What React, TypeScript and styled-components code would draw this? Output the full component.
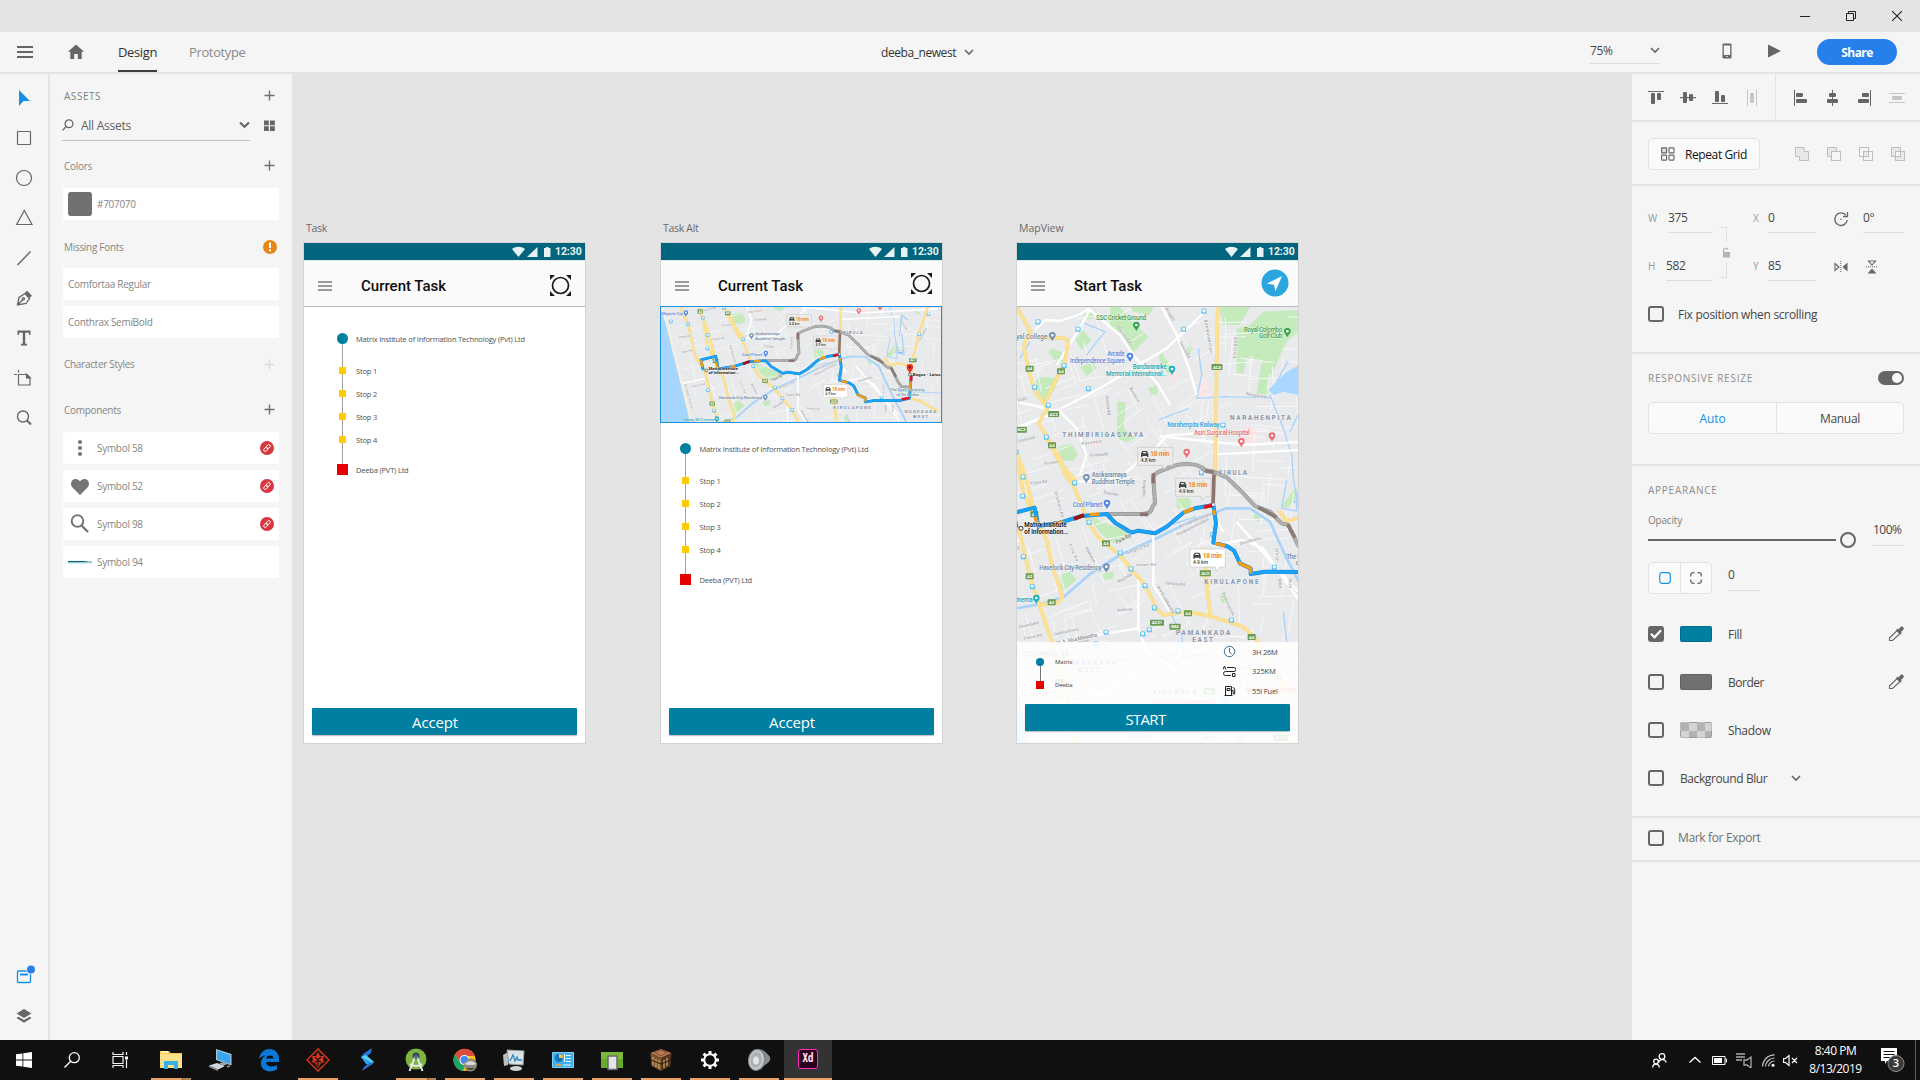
import React, { createContext, useContext } from 'react';
import styled, { createGlobalStyle, css } from 'styled-components';

const UI = '"Open Sans", "Noto Sans", sans-serif';
const BORDER = '#e4e4e4';
const PANEL = '#f5f5f5';
const INK = '#666666';

const Global = createGlobalStyle`
  * { box-sizing: border-box; }
  body { margin: 0; font-family: ${UI}; background: ${PANEL}; }
  svg { display: block; flex: none; }
`;

const Text = styled.span<{ $s?: number; $c?: string; $ls?: number; $w?: number }>`
  display: block;
  font-size: ${p => p.$s ?? 12}px;
  color: ${p => p.$c ?? '#464646'};
  letter-spacing: ${p => p.$ls ?? -0.3}px;
  font-weight: ${p => p.$w ?? 400};
  line-height: 16px;
  padding-top: ${p => p.$s ? 0 : 2}px;
  white-space: nowrap;
`;

/* ---------- icon helper ---------- */
type IconProps = { w: number; h: number; children: React.ReactNode; c?: string; f?: string; sw?: number };
const Icon = ({ w, h, children, c = INK, f = 'none', sw = 1.2 }: IconProps) => (
  <svg width={w} height={h} viewBox={`0 0 ${w} ${h}`} fill={f} stroke={c} strokeWidth={sw}>{children}</svg>
);
const Plus = ({ c = '#6e6e6e' }: { c?: string }) => (
  <Icon w={11} h={11} c={c} sw={1.4}><path d="M5.5 .5v10M.5 5.5h10" /></Icon>
);

/* ---------- frame ---------- */
const Screen = styled.div`
  width: 1920px; height: 1080px; display: flex; flex-direction: column; overflow: hidden; background: ${PANEL};
`;
const TitleBar = styled.div`
  height: 32px; background: #e4e4e4; display: flex; justify-content: flex-end; align-items: center; gap: 36px; padding-right: 18px;
`;
const Toolbar = styled.div`
  height: 42px; border-bottom: 2px solid ${BORDER}; background: ${PANEL};
  display: grid; grid-template-columns: 292px 1298px 330px;
`;
const ToolbarLeft = styled.div`display: flex; align-items: stretch; padding-left: 17px;`;
const ToolIconBox = styled.div<{ $w: number; $pt: number }>`width: ${p => p.$w}px; padding-top: ${p => p.$pt}px;`;
const Tab = styled.div<{ $on?: boolean }>`
  height: 40px; margin-right: 32px; padding-top: 12px; display: flex; white-space: nowrap;
  border-bottom: 2px solid ${p => p.$on ? '#3c3c3c' : 'transparent'};
`;
const DocTitle = styled.div`display: flex; align-items: flex-start; justify-content: center; gap: 8px; padding: 11px 27px 0 0;`;
const TitleChevron = styled.div`padding-top: 6px;`;
const ZoomField = styled.div`
  width: 70px; height: 26px; border-bottom: 1px solid #dcdcdc; display: flex; justify-content: space-between; align-items: center;
`;
const ToolbarRight = styled.div`display: flex; align-items: center; padding-bottom: 2px;`;
const ShareButton = styled.div`
  width: 80px; height: 26px; border-radius: 13px; background: #2680eb; display: flex; align-items: center; justify-content: center;
  margin-left: 36px; margin-top: 1px;
`;
const Gap = styled.div<{ $w: number }>`width: ${p => p.$w}px; flex: none;`;
const Main = styled.div`height: 966px; display: grid; grid-template-columns: 50px 242px 1340px 288px;`;

/* ---------- tool strip ---------- */
const Strip = styled.div`border-right: 2px solid ${BORDER}; display: flex; flex-direction: column; justify-content: space-between; padding: 4px 0;`;
const StripGroup = styled.div`display: flex; flex-direction: column;`;
const Tool = styled.div`height: 40px; display: flex; align-items: center; justify-content: center;`;

const ToolStrip = () => (
  <Strip>
    <StripGroup>
      <Tool><Icon w={24} h={24} f="#1592e6" c="none"><path d="M7 4v16l4.5-5H18z" /></Icon></Tool>
      <Tool><Icon w={24} h={24}><rect x="5.5" y="5.5" width="13" height="13" rx=".5" /></Icon></Tool>
      <Tool><Icon w={24} h={24}><circle cx="12" cy="12" r="7.5" /></Icon></Tool>
      <Tool><Icon w={24} h={24}><path d="M12.3 4.5 20 18.5H4.7z" /></Icon></Tool>
      <Tool><Icon w={24} h={24} sw={1.4}><path d="M5.5 19 18.5 5.5" /></Icon></Tool>
      <Tool><Icon w={24} h={24} sw={1.3}><path d="M5.500 19 7 11.500l6-4 4.500 5-3.500 5-8.500 1.500zM5.800 18.700l5-5.200" /><circle cx="11.400" cy="12.800" r="1.100" /><path d="m13.800 5.800 5 5" strokeWidth="3.200" /></Icon></Tool>
      <Tool><Icon w={24} h={24} f={INK} c="none"><path d="M5.500 4.500h13V9H17V6.700h-3.800v11H15V19.500H9v-1.800h1.800v-11H7V9H5.500z" /></Icon></Tool>
      <Tool><Icon w={24} h={24}><path d="M6.500 8.500h8.500l3 3v7.500H6.500zM2 8.500h3M6.500 4v2.500" /><path d="M14.500 8.500v3.500h3.500z" fill={INK} /></Icon></Tool>
      <Tool><Icon w={24} h={24} sw={1.4}><circle cx="11" cy="10.500" r="5.500" /><path d="m15 14.500 4 4" strokeWidth="2" /></Icon></Tool>
    </StripGroup>
    <StripGroup>
      <Tool><Icon w={26} h={26} c="#1592e6" sw={1.3}><rect x="6.500" y="8" width="13" height="11.500" rx=".8" /><path d="M9 11.500h8" strokeWidth="2" /><circle cx="20" cy="6.500" r="4.800" fill={PANEL} stroke="none" /><circle cx="20" cy="6.500" r="4" fill="#2680eb" stroke="none" /></Icon></Tool>
      <Tool><Icon w={24} h={24} f={INK} c="none"><path d="m12 5 7.500 4.500L12 14 4.500 9.500zM4.500 14l2-1.200L12 16l5.500-3.200 2 1.200L12 18.800z" /></Icon></Tool>
    </StripGroup>
  </Strip>
);

/* ---------- assets panel ---------- */
const Assets = styled.div`padding: 11px 13px 0 13px; display: flex; flex-direction: column;`;
const SectionHead = styled.div<{ $h: number; $pt?: number; $pr?: number }>`
  height: ${p => p.$h}px; padding: ${p => p.$pt ?? 0}px ${p => p.$pr ?? 4}px 0 1px;
  display: flex; align-items: center; justify-content: space-between; flex: none;
`;
const FilterRow = styled.div`height: 35px; display: flex; align-items: center; justify-content: space-between; padding-right: 4px; margin-left: -1px;`;
const FilterField = styled.div`
  width: 188px; height: 35px; border-bottom: 1px solid #c4c4c4; display: flex; align-items: center; gap: 7px; padding-top: 4px;
`;
const GridToggle = styled.div`padding-top: 4px;`;
const Grow = styled.div`flex: 1;`;
const Card = styled.div`
  height: 32px; margin-bottom: 6px; background: #fff; border-radius: 2px; display: flex; align-items: center; padding: 0 5px; flex: none;
`;
const CardThumb = styled.div`width: 29px; display: flex; align-items: center;`;
const Swatch = styled.div`width: 24px; height: 24px; border-radius: 3px; background: #707070;`;

const LinkBadge = () => (
  <svg width="14" height="14" viewBox="0 0 14 14">
    <circle cx="7" cy="7" r="7" fill="#d7373f" />
    <g transform="rotate(-48 7 7)" fill="none" stroke="#fff" strokeWidth=".9">
      <rect x="2.800" y="5.500" width="4.800" height="3" rx="1.500" /><rect x="6.400" y="5.500" width="4.800" height="3" rx="1.500" />
    </g>
  </svg>
);
const SMALL = '#868686';
const components: { name: string; linked: boolean; icon: React.ReactNode }[] = [
  { name: 'Symbol 58', linked: true, icon: <Icon w={24} h={24} f="#757575" c="none"><circle cx="12" cy="6" r="2.100" /><circle cx="12" cy="12" r="2.100" /><circle cx="12" cy="18" r="2.100" /></Icon> },
  { name: 'Symbol 52', linked: true, icon: <Icon w={24} h={24} f="#757575" c="none"><path d="M12 21 4.500 13.600C1.800 10.800 2.800 5 7.500 5c2 0 3.600 1.200 4.500 2.600C12.900 6.200 14.500 5 16.500 5c4.700 0 5.700 5.800 3 8.600z" /></Icon> },
  { name: 'Symbol 98', linked: true, icon: <Icon w={24} h={24} c="#757575" sw={2}><circle cx="9.500" cy="9" r="5.800" /><path d="m13.500 13.500 6.500 6.500" strokeWidth="2.400" /></Icon> },
  { name: 'Symbol 94', linked: false, icon: <Icon w={24} h={24} c="#00657d" sw={1.5}><path d="M0 11.700h20" /><path d="M17 11.900h7" stroke="#7fb2be" /><path d="M0 13h24" stroke="#b9d5dc" strokeWidth="1" /></Icon> },
];

const AssetsPanel = () => (
  <Assets>
    <SectionHead $h={21}><Text $s={10} $ls={0.55} $c="#808080">ASSETS</Text><Plus /></SectionHead>
    <FilterRow>
      <FilterField>
        <Icon w={12} h={12} sw={1.3}><circle cx="7" cy="4.800" r="3.900" /><path d="M4.200 7.600.6 11.300" /></Icon>
        <Text $ls={-0.25} $c="#5f5f5f">All Assets</Text><Grow />
        <Icon w={11} h={8} sw={2.2}><path d="m1 1.500 4.500 4.300L10 1.500" /></Icon>
      </FilterField>
      <GridToggle><Icon w={11} h={11} f={INK} c="none"><path d="M0 .5h4.800v4.700H0zM6 .5h4.800v4.700H6zM0 6.300h4.800V11H0zM6 6.300h4.800V11H6z" /></Icon></GridToggle>
    </FilterRow>
    <SectionHead $h={47} $pt={2}><Text $s={10} $c={SMALL}>Colors</Text><Plus /></SectionHead>
    <Card><CardThumb><Swatch /></CardThumb><Text $s={10} $c={SMALL}>#707070</Text></Card>
    <SectionHead $h={42} $pr={2}><Text $s={10} $c={SMALL}>Missing Fonts</Text>
      <svg width="14" height="14" viewBox="0 0 14 14"><circle cx="7" cy="7" r="7" fill="#e68619" /><path d="M7 2.500v5.500M7 9.200v2" stroke="#fff" strokeWidth="2" /></svg>
    </SectionHead>
    <Card><Text $s={10} $c={SMALL}>Comfortaa Regular</Text></Card>
    <Card><Text $s={10} $c={SMALL}>Conthrax SemiBold</Text></Card>
    <SectionHead $h={40}><Text $s={10} $c={SMALL}>Character Styles</Text><Plus c="#dcdcdc" /></SectionHead>
    <SectionHead $h={48} $pt={3}><Text $s={10} $c={SMALL}>Components</Text><Plus /></SectionHead>
    {components.map(c => (
      <Card key={c.name}><CardThumb>{c.icon}</CardThumb><Text $s={10} $c={SMALL}>{c.name}</Text><Grow />{c.linked && <LinkBadge />}</Card>
    ))}
  </Assets>
);

/* ---------- map drawing ---------- */
type Bounds = { x0: number; y0: number; x1: number; y1: number };
const MapBounds = createContext<Bounds>({ x0: 0, y0: 0, x1: 0, y1: 0 });
const visible = (b: Bounds, x: number, y: number, w: number) => x + w > b.x0 && x < b.x1 && y > b.y0 && y < b.y1 + 4;

type MapTextProps = { x: number; y: number; l: number; c: string; s?: number; b?: boolean; r?: number; children: string };
const T = ({ x, y, l, c, s = 19, b, r, children }: MapTextProps) => {
  const bounds = useContext(MapBounds);
  if (!visible(bounds, x, y, l)) return null;
  return (
    <text x={x} y={y} textLength={l} fontSize={s} fill={c} fontWeight={b ? 700 : 500} fontFamily="Roboto, sans-serif"
      transform={r ? `rotate(${r} ${x} ${y})` : undefined} stroke="#ffffff" strokeOpacity=".6" strokeWidth="2.500" paintOrder="stroke">{children}</text>
  );
};
const Pin = ({ x, y, c }: { x: number; y: number; c: string }) => (
  <g><path d={`M${x} ${y + 15}c-3-8-10-11-10-18a10 10 0 0 1 20 0c0 7-7 10-10 18z`} fill={c} /><circle cx={x} cy={y - 3} r="4" fill="#fff" /></g>
);
const GREEN = '#419a4b', BLUE = '#5f83d8', SLATE = '#6c87a3', TEAL = '#23a5b3', RED = '#dd7078', AREA = '#8393ad', ROADTXT = '#a2a2a2';

const minorRoads = (() => {
  let seed = 11;
  const rnd = () => { seed = (seed * 16807) % 2147483647; return seed / 2147483647; };
  let d = '';
  for (let i = 0; i < 400; i++) {
    const x = -90 + rnd() * 1160, y = 290 + rnd() * 1290;
    const base = x < 300 ? -0.28 : x < 560 ? -0.55 : 0.05;
    const a = base + (rnd() < 0.5 ? 0 : Math.PI / 2) + (rnd() - 0.5) * 0.24;
    const l = 35 + rnd() * 90;
    d += `M${x.toFixed(0)} ${y.toFixed(0)}l${(Math.cos(a) * l).toFixed(0)} ${(Math.sin(a) * l).toFixed(0)}`;
  }
  return d;
})();
const yellowRoads = [
  'M20 276 45 320 62 352 48 372 42 400 60 480 75 530 103 567 112 580 85 625 105 655 150 730 165 780 190 810 235 920 262 965 330 1020 365 1065 405 1110 440 1180 460 1200 530 1190 600 1203 700 1235 740 1275 800 1385 864 1445',
  'M62 366 128 368 165 370 175 380 165 440 135 500 103 567',
  'M623 276 620 450 615 760 610 866', 'M578 1000 588 1080 600 1203',
  'M-80 664-44 743-16 873 27 945 60 1085 80 1145 130 1295 165 1415 190 1584', 'M20 735 40 830 76 910 110 975 130 1065 157 1145 145 1163 83 1170',
  'M-1 664 42 772 76 900', 'M107 664 150 743 200 801',
  'M993 664 957 772 928 887 918 974 914 1060 964 1074 1036 1118', 'M806 887 830 918 864 910 925 920',
];
const whiteRoads = [
  'M20 637 105 605 270 520 470 400 590 285', 'M20 640 60 627', 'M75 345 105 315 150 318 205 300 240 280', 'M240 285 190 370 140 450',
  'M455 276 500 360 540 470 560 540', 'M190 801 330 790 400 725 440 697 470 662 615 650', 'M615 718 870 705', 'M385 1090 385 1240 290 1255 150 1280',
  'M385 1240 410 1310 480 1350 515 1310', 'M240 285 330 360 370 420 445 510 480 570', 'M20 560 150 590 200 640 230 720 210 780', 'M430 960 430 1110 480 1190',
  'M480 1350 350 1390 300 1430 90 1480', 'M610 990 700 975 760 1000 800 1060 864 1130', 'M640 950 610 900', 'M-90 1000 30 975', 'M480 1350 560 1460 590 1584', 'M450 664 700 690 1036 672', 'M680 920 800 1060 870 1160',
];
const greens = [
  'M75 490 105 485 145 490 135 520 105 565 85 530z', 'M125 400 155 410 160 440 140 445 115 410z', 'M195 375 220 345 245 375 215 405z', 'M220 300 260 278 250 310 230 315z',
  'M300 276 330 276 385 340 400 350 415 365 370 412 340 365 300 330z', 'M360 276 430 276 420 300 370 290z', 'M210 455 250 440 258 460 230 485z', 'M455 412 500 480 485 495 445 430z', 'M415 520 440 510 445 535 425 543z',
  'M627 276 720 276 690 330 640 330z', 'M680 340 720 330 760 290 864 285 864 350 830 380 780 490 770 540 740 535 755 440 710 430 700 475 680 475z',
  'M322 560 348 562 340 640 375 670 350 682 320 670z', 'M145 695 180 688 195 705 190 738 150 735z', 'M500 850 538 848 540 880 500 880z', 'M235 900 300 930 345 945 365 970 310 985 270 955z',
  'M735 895 757 905 745 920 730 910z', 'M150 1080 180 1070 200 1095 155 1130z', 'M275 1080 310 1068 310 1090 285 1095z', 'M630 1140 645 1135 650 1160 635 1165z', 'M535 390 550 400 540 418 528 410z', 'M157 690 185 688 205 720 185 738z',
  'M930 670 960 690 950 700z', 'M860 815 868 845 830 880 812 875z', 'M525 860 545 855 540 880z',
];
const stations: [number, number][] = [
  [84, 321], [204, 343], [582, 289], [521, 343], [162, 452], [74, 517], [235, 521], [115, 571], [109, 667], [39, 786], [194, 804], [574, 773], [639, 631],
  [237, 922], [331, 1014], [363, 1062], [405, 1112], [433, 1179], [504, 1188], [664, 1216], [40, 1025], [67, 1115], [288, 1252], [398, 1257], [418, 1244], [609, 959], [793, 1057], [258, 1287], [643, 1453], [808, 1387], [589, 1564], [690, 1577], [857, 1541],
  [-46, 738], [18, 711], [-120, 727], [38, 844], [996, 696], [955, 783], [875, 858],
];
const shields: [number, number, string][] = [
  [59, 461, 'A4'], [153, 469, 'A4'], [131, 597, 'AC3'], [34, 644, 'AC2'], [126, 691, 'A4'], [621, 456, 'AC8'], [73, 898, 'A2'], [288, 985, 'A4'], [59, 1084, 'A2'], [125, 1162, 'A2'],
  [586, 1075, 'AC0'], [441, 1223, 'AC21'], [534, 1195, 'A4'], [495, 1235, 'B84'], [725, 1266, 'A4'], [599, 1429, 'B84'], [812, 1568, 'AC19'], [147, 1402, 'A2'], [7, 683, 'A2'], [928, 895, 'AC1'],
];
const roadNames: [number, number, number, number, string][] = [
  [-85, 800, 50, -8, 'Adams Rd'], [-70, 865, 45, -12, 'Nimal Rd'], [-30, 1015, 60, -12, 'Vajira Rd'], [100, 750, 45, -8, 'Thurstan'], [240, 725, 55, -4, 'Fonseka Rd'],
  [60, 808, 52, -5, 'Vijaya Rd'], [320, 335, 70, 55, 'Maitland Pl'], [508, 382, 55, 62, 'Sarana Rd'], [583, 315, 100, 80, 'Bambalapitiya'], [287, 540, 60, 85, 'Jawatta Rd'], [358, 520, 50, 60, 'Bullers Ln'], [678, 430, 65, -88, 'Elvitigala'],
  [465, 280, 45, 62, 'Alfred Pl'], [708, 540, 60, 10, 'Nawala Rd'], [24, 682, 52, -12, 'Lauries Rd'], [24, 560, 28, -15, 'Dupli'], [280, 835, 45, 12, 'Siripa Rd'], [133, 830, 80, 75, 'Dickmans Rd'], [175, 990, 55, 65, 'Fife Rd'], [225, 1000, 50, 60, 'Park Avenue'],
  [350, 1018, 72, -20, 'Gregory Rd'], [378, 1052, 60, 0, 'Iswari Rd'], [325, 1105, 48, -30, 'Wasala Rd'], [465, 1108, 60, 5, 'Temple Rd'], [440, 1115, 95, 60, 'W A Silva Mawatha'], [322, 1190, 45, -5, 'Arethusa'], [130, 1262, 78, -12, 'Jaya Road Lane'], [26, 1240, 62, -12, 'Alexandra Rd'],
  [42, 1275, 55, -12, 'Frances Rd'], [500, 965, 110, -27, 'Thalakotuwa Gardens'], [510, 938, 95, -22, 'Kirulapone Canal'], [635, 1135, 75, 65, 'Polhengoda'], [690, 990, 65, -15, 'Suvisuddharama'], [795, 1000, 40, 85, '5th Ln'], [805, 1090, 30, 85, '3rd Ln'], [835, 1090, 30, 85, '7th Ln'], [405, 845, 50, -88, 'Isipathana'],
  [190, 1290, 50, -12, 'Hampden'], [310, 1338, 50, -3, 'Fussels Ln'], [520, 1330, 70, -8, 'Edmonton Rd'], [100, 1440, 50, -8, 'Moor Rd'], [170, 1460, 60, -8, 'Hotel Road'], [25, 1390, 100, 75, 'Marine Drive'], [780, 1475, 50, -5, 'Rubber Ln'], [360, 1570, 55, -2, 'Station Rd'], [690, 1365, 60, -15, 'Kirula Road'],
  [-62, 1000, 110, 75, 'Colombo Plan Rd'], [870, 720, 50, 60, 'Park Rd'], [960, 810, 60, -60, 'Nawala Road'], [215, 690, 60, -8, 'Kassapa'],
];
const bubbles: { x: number; y: number; km: string; fill: string }[] = [
  { x: 383, y: 697, km: '4.8 km', fill: '#ececec' }, { x: 497, y: 790, km: '4.9 km', fill: '#ececec' }, { x: 540, y: 1002, km: '4.9 km', fill: '#ffffff' },
];

const ROUTE = 'M20 938 10 894 74 878 85 933 150 923 215 903 290 897 315 923 365 953 385 947 435 955 470 935 520 893 555 880 610 870 618 925 610 983 650 993 672 1007 690 1045 722 1060 722 1077 765 1070 870 1071 914 1060 921 959';
const ALT = 'M290 897H395Q425 897 427 875L435 865 430 790Q430 775 455 767L500 750Q560 740 585 765L610 770 650 787 690 825 735 873 780 890 815 925 835 930 863 988 878 1010 918 1012';

const MapArt = ({ w, h, view }: { w: number; h: number; view: [number, number, number, number] }) => {
  const bounds = { x0: view[0], y0: view[1], x1: view[0] + view[2], y1: view[1] + view[3] };
  return (
    <MapBounds.Provider value={bounds}>
      <svg width={w} height={h} viewBox={view.join(' ')} preserveAspectRatio="none" fill="none" strokeLinejoin="round">
        <rect x="-170" y="270" width="1240" height="1330" fill="#e9eaec" />
        {greens.map(d => <path key={d} d={d} fill="#c5ebbd" />)}
        <path d="M250 670 275 672 270 692 240 695zM568 495 590 495 605 540 570 548zM475 475 500 470 500 500 478 505zM700 630 750 640 740 690 690 680z" fill="#f8e5e6" />
        <path d={minorRoads} stroke="#f8f8fa" strokeWidth="3" />
        <path d="M20 1180 100 1165 160 1147 240 1077 330 1020 450 965 540 920 650 880 720 880 780 920 800 965 830 1030 900 1164" stroke="#a9d3fb" strokeWidth="8" />
        <path d="M780 540 820 640 845 720 850 790 864 870M560 550 640 545 780 548M560 550 575 480 565 400M830 795 815 880 860 888 860 830M833 440 790 520M864 1030 1050 1038M480 1190 515 1260 520 1310 430 1330M820 1190 830 1280M840 650 864 600M480 930 560 905M445 615 535 580M210 320 285 350 230 420M60 380 30 430" stroke="#a9d3fb" strokeWidth="4" />
        <path d="M790 540 775 525 830 470 864 452 864 540 820 530z" fill="#a9d7ff" />
        <path d="M870 790 880 700 905 720M850 860 890 870 880 780" stroke="#a9d3fb" strokeWidth="6" />
        {whiteRoads.map(d => <path key={d} d={d} stroke="#fff" strokeWidth="7" />)}
        {yellowRoads.map(d => <path key={d} d={d} stroke="#f5d884" strokeWidth="11" />)}
        {yellowRoads.map(d => <path key={`inner-${d}`} d={d} stroke="#fde293" strokeWidth="8" />)}
        <path d="M-170 660H-158L-131 743-81 945-27 1164 30 1400 68 1590H-170z" fill="#f5f0e2" />
        <path d="M-170 660H-168L-141 743-91 945-37 1164 20 1400 56 1590H-170z" fill="#a6d5fd" />
        {roadNames.map(([x, y, l, r, t]) => <T key={t} x={x} y={y} l={l} r={r} s={13} c={ROADTXT}>{t}</T>)}
        {stations.map(([x, y]) => <g key={`${x}-${y}`}><rect x={x - 7.5} y={y - 7.5} width="15" height="15" rx="3" fill="#4dbcf5" /><path d={`M${x - 4} ${y - 4.5}h8v6h-8zM${x - 3} ${y + 4}h6`} fill="#fff" stroke="#fff" strokeWidth="1.500" /></g>)}
        {shields.filter(([x, y]) => visible(bounds, x, y, 0)).map(([x, y, t]) => (
          <g key={`${x}-${y}`}><rect x={x - t.length * 4.5 - 3} y={y - 9} width={t.length * 9 + 6} height="18" rx="2" fill="#6b9b50" /><text x={x} y={y + 5} textAnchor="middle" fontSize="13" fontWeight="700" fill="#fff" fontFamily="Roboto, sans-serif">{t}</text></g>
        ))}
        <path d={ALT} stroke="#8d8d8d" strokeWidth="12" /><path d={ALT} stroke="#b0b0b0" strokeWidth="9" />
        <path d="M430 775V805M390 898H415M612 778 609 866" stroke="#8d7370" strokeWidth="11" /><path d="M585 768 612 772M745 877 800 907M833 928 855 968" stroke="#8a7d77" strokeWidth="11" />
        <path d={ROUTE} stroke="#1482d2" strokeWidth="12" /><path d={ROUTE} stroke="#18a4f8" strokeWidth="9" />
        <path d="M75 905 83 930M138 926 160 921M240 899 268 897M522 892 550 881M611 885 613 900M615 985 645 992M686 1040 694 1048 722 1060 722 1075M10 894 16 925M914 1030 919 990" stroke="#f59b14" strokeWidth="10" />
        <path d="M192 912 222 900" stroke="#a50f14" strokeWidth="11" /><path d="M582 877 610 870M880 1065 912 1060M920 985 922 962" stroke="#e4131b" strokeWidth="11" />
        <circle cx="610" cy="869" r="4" fill="#fff" />
        <T x={258} y={314} l={150} c={GREEN}>SSC Cricket Ground</T><T x={8} y={371} l={104} c={SLATE}>oyal College</T>
        <T x={292} y={424} l={52} c={BLUE}>Arcade</T><T x={180} y={444} l={165} c={BLUE}>Independence Square</T>
        <T x={368} y={463} l={102} c={TEAL}>Bandaranaike</T><T x={288} y={484} l={182} c={TEAL}>Memorial International...</T>
        <T x={702} y={350} l={115} c={GREEN}>Royal Colombo</T><T x={747} y={370} l={70} c={GREEN}>Golf Club</T>
        <T x={660} y={614} l={182} c={AREA} b>NARAHENPITA</T><T x={157} y={665} l={243} c={AREA} b>THIMBIRIGASYAYA</T>
        <T x={472} y={637} l={157} c="#2d9fdc">Narahenpita Railway</T><T x={552} y={660} l={167} c={RED}>Asiri Surgical Hospital</T>
        <T x={625} y={780} l={86} c={AREA} b>KIRULA</T><T x={245} y={787} l={105} c={SLATE}>Asokaramaya</T><T x={245} y={806} l={130} c={SLATE}>Buddhist Temple</T>
        <T x={188} y={875} l={88} c={BLUE}>Cool Planet</T><T x={88} y={1066} l={187} c={SLATE}>Havelock City Residency</T>
        <T x={583} y={1106} l={163} c={AREA} b>KIRULAPONE</T><T x={498} y={1261} l={163} c={AREA} b>PAMANKADA</T><T x={547} y={1282} l={62} c={AREA} b>EAST</T>
        <T x={38} y={1324} l={138} c={AREA} b>COLOMBO 06</T><T x={155} y={1350} l={163} c={AREA} b>PAMANKADA</T><T x={202} y={1372} l={68} c={AREA} b>WEST</T><T x={428} y={1436} l={132} c={AREA} b>VILAWALA</T>
        <T x={428} y={1470} l={190} c={RED}>Colombo South Teaching</T><T x={708} y={1431} l={152} c={RED}>Medihelp Hospitals</T>
        <T x={-66} y={1160} l={134} c={TEAL}>Savoy 3D Cinema</T><T x={-160} y={700} l={92} c={BLUE}>Majestic City</T>
        <T x={829} y={1031} l={150} c={SLATE}>The Open University</T><T x={857} y={1050} l={95} c={SLATE}>of Sri Lanka</T>
        <T x={892} y={1126} l={137} c={AREA} b>NUGEGODA</T><T x={928} y={1148} l={66} c={AREA} b>WEST</T>
        <T x={320} y={988} l={50} r={-28} s={16} c="#777">Park Rd</T><T x={140} y={1290} l={125} r={-12} s={16} c="#888">W. A. Silva Mawatha</T>
        <Pin x={379} y={333} c="#34a048" /><Pin x={127} y={364} c="#7393b3" /><Pin x={360} y={426} c="#4f86ec" /><Pin x={486} y={465} c="#1fb0bf" /><Pin x={832} y={352} c="#34a048" />
        <Pin x={786} y={665} c="#ef6c72" /><Pin x={694} y={682} c="#ef6c72" /><Pin x={530} y={714} c="#ef6c72" /><Pin x={229} y={790} c="#7393b3" /><Pin x={291} y={867} c="#4f86ec" /><Pin x={289} y={1058} c="#7393b3" /><Pin x={79} y={1152} c="#1fb0bf" /><Pin x={-55} y={691} c="#4f86ec" />
        <circle cx="33" cy="940" r="6" fill="#fff" stroke="#333" strokeWidth="3" />
        <T x={43} y={936} l={127} c="#222" b>Matrix Institute</T><T x={43} y={957} l={132} c="#222" b>of Information...</T>
        <T x={928} y={964} l={120} c="#222" b>Bogus - Lotus</T>
        <path d="M915 958c-3-18-14-19-14-32a14 14 0 0 1 28 0c0 13-11 14-14 32z" fill="#e0342c" /><circle cx="915" cy="926" r="5" fill="#8c1510" /><circle cx="915" cy="958" r="6" fill="#fff" stroke="#333" strokeWidth="3" />
        {bubbles.map(({ x, y, km, fill }) => (
          <g key={y} transform={`translate(${x} ${y})`}>
            <path d="M0 0H106V54H90L78 66 76 54H0z" fill={fill} stroke="#c4c4c4" strokeWidth="2" />
            <path d="M10 29V19l4-8h14l4 8v10h-4v-3H14v3z" fill="#444" /><path d="M15 18l2-4h8l2 4z" fill={fill} />
            <text x="38" y="26" textLength="57" fontSize="20" fontWeight="700" fill="#f28c1e" fontFamily="Roboto, sans-serif">18 min</text>
            <text x="9" y="44" textLength="45" fontSize="15" fontWeight="500" fill="#444" fontFamily="Roboto, sans-serif">{km}</text>
          </g>
        ))}
      </svg>
    </MapBounds.Provider>
  );
};

/* ---------- artboards ---------- */
const Canvas = styled.div`background: #e4e4e4; padding: 146px 0 0 12px; display: flex; align-items: flex-start;`;
const BoardColumn = styled.div<{ $mr: number }>`width: 281px; margin-right: ${p => p.$mr}px;`;
const BoardLabel = styled.div`height: 23px; padding-left: 2px; display: flex; align-items: flex-start;`;
const Board = styled.div`height: 500px; background: #fff; display: flex; flex-direction: column; box-shadow: 0 0 0 1px #d4d4d4;`;
const StatusBar = styled.div`
  height: 17px; background: #00657d; display: flex; align-items: center; justify-content: flex-end; padding-right: 4px; flex: none;
`;
const StatusTime = styled.span`font: 700 10.5px/17px Roboto, sans-serif; color: #e8f2f4; width: 26px; letter-spacing: -.1px;`;
const AppBar = styled.div`
  height: 47px; background: #fafafa; border-top: 1px solid #dfeaec; border-bottom: 1px solid #b9b9b9; display: flex; align-items: center; padding: 4px 0 0 14px; flex: none;
`;
const AppTitle = styled.span`font: 500 15px/20px Roboto, sans-serif; letter-spacing: 0; color: #0c0c0c; margin-left: 29px; flex: 1;`;
const AppAction = styled.div<{ $mr: number; $up?: number }>`margin-right: ${p => p.$mr}px; margin-bottom: ${p => p.$up ?? 0}px;`;
const Stops = styled.div<{ $pl: number; $pt: number }>`
  position: relative; margin-left: ${p => p.$pl}px; margin-top: ${p => p.$pt}px; height: 142px; flex: none;
  display: flex; flex-direction: column;
  &::before { content: ''; position: absolute; left: 5px; top: 5px; bottom: 5px; width: 1px; background: #a0a0a0; }
`;
const Stop = styled.div<{ $h: number; $mt: number }>`height: ${p => p.$h}px; margin-top: ${p => p.$mt}px; display: flex; align-items: center; flex: none;`;
const MarkerSlot = styled.div`width: 19.5px; display: flex; position: relative; flex: none;`;
const Marker = styled.div<{ $k: 'start' | 'mid' | 'end' }>`
  ${p => p.$k === 'start' && css`width: 11px; height: 11px; border-radius: 50%; background: #007fa3;`}
  ${p => p.$k === 'mid' && css`width: 7px; height: 7px; margin-left: 2px; background: #ffcc00;`}
  ${p => p.$k === 'end' && css`width: 11px; height: 11px; background: #e60000;`}
`;
const Button = styled.div`
  height: 27px; margin: 0 8px; background: #007fa3; border-radius: 1px; box-shadow: 0 1px 1px rgba(0,0,0,.25);
  display: flex; align-items: center; justify-content: center; padding-right: 19px; flex: none;
`;
const StartButton = styled(Button)`padding: 2px 24px 0 0;`;
const Spacer = styled.div`flex: 1;`;
const BottomPad = styled.div<{ $h: number }>`height: ${p => p.$h}px; flex: none;`;
const MapFrame = styled.div<{ $sel?: boolean }>`
  margin: ${p => p.$sel ? '-1px 0 0 -1px' : '0'}; height: ${p => p.$sel ? 117 : 436}px; flex: none; position: relative; overflow: hidden;
  width: ${p => p.$sel ? 282 : 281}px;
  ${p => p.$sel && css`border: 1px solid #1e90e0;`}
`;
const TripSheet = styled.div`
  position: absolute; left: 0; right: 0; bottom: 0; height: 101px; background: rgba(255,255,255,.86); display: flex; flex-direction: column;
`;
const TripInfo = styled.div`height: 62px; display: flex; justify-content: space-between;`;
const TripFacts = styled.div`display: flex; flex-direction: column; width: 75px;`;
const Fact = styled.div`height: 19.5px; display: grid; grid-template-columns: 29px 1fr; align-items: center;`;
const TripList = styled.div`
  position: relative; width: 60px; height: 31px; margin: 12px 0 0 19px; display: flex; flex-direction: column; justify-content: space-between;
  &::before { content: ''; position: absolute; left: 4px; top: 4px; bottom: 4px; width: 1px; background: #777; }
`;
const TripStop = styled.div`height: 8px; display: grid; grid-template-columns: 19px 1fr; align-items: center;`;
const TripMarker = styled.div<{ $end?: boolean }>`position: relative; width: 8px; height: 8px; background: ${p => p.$end ? '#e60000' : '#007fa3'}; border-radius: ${p => p.$end ? 0 : '50%'};`;

const Burger = () => <Icon w={14} h={10} c="#7b7b7b" sw={1.3}><path d="M0 1h14M0 5h14M0 9h14" /></Icon>;
const StatusIcons = () => (
  <svg width="43" height="12" viewBox="0 0 43 12" fill="#e8f2f4"><path d="M0 3C4 0 9 0 13 3L6.500 11zM15 11 25.500 1V11zM32 2h2V1h2.500v1h2v9H32z" /></svg>
);
const Phone = ({ title, action, children }: { title: string; action: React.ReactNode; children: React.ReactNode }) => (
  <Board>
    <StatusBar><StatusIcons /><StatusTime>12:30</StatusTime></StatusBar>
    <AppBar><Burger /><AppTitle>{title}</AppTitle>{action}</AppBar>
    {children}
  </Board>
);
const FocusIcon = () => (
  <Icon w={21} h={21} c="#1a1a1a" sw={1.7}><circle cx="10.500" cy="10.500" r="8" /><path d="M0 0h5L0 5zM21 0h-5l5 5zM0 21h5l-5-5zM21 21h-5l5-5z" fill="#1a1a1a" stroke="none" /></Icon>
);
const stops: { name: string; kind: 'start' | 'mid' | 'end'; h: number; mt: number }[] = [
  { name: 'Matrix Institute of Information Technology (Pvt) Ltd', kind: 'start', h: 11, mt: 0 },
  { name: 'Stop 1', kind: 'mid', h: 7, mt: 23 },
  { name: 'Stop 2', kind: 'mid', h: 7, mt: 16 },
  { name: 'Stop 3', kind: 'mid', h: 7, mt: 16 },
  { name: 'Stop 4', kind: 'mid', h: 7, mt: 16 },
  { name: 'Deeba (PVT) Ltd', kind: 'end', h: 11, mt: 21 },
];
const StopList = ({ pl, pt }: { pl: number; pt: number }) => (
  <Stops $pl={pl} $pt={pt}>
    {stops.map(s => (
      <Stop key={s.name} $h={s.h} $mt={s.mt}><MarkerSlot><Marker $k={s.kind} /></MarkerSlot><Text $s={7.5} $ls={-0.18} $c="#505050">{s.name}</Text></Stop>
    ))}
  </Stops>
);

const CanvasArea = () => (
  <Canvas>
    <BoardColumn $mr={76}>
      <BoardLabel><Text $s={10.5} $c="#6a6a6a">Task</Text></BoardLabel>
      <Phone title="Current Task" action={<AppAction $mr={14}><FocusIcon /></AppAction>}>
        <StopList pl={32.5} pt={26} />
        <Spacer /><Button><Text $s={15} $ls={-0.15} $c="#fff">Accept</Text></Button><BottomPad $h={8} />
      </Phone>
    </BoardColumn>
    <BoardColumn $mr={75}>
      <BoardLabel><Text $s={10.5} $c="#6a6a6a" $ls={-0.3}>Task Alt</Text></BoardLabel>
      <Phone title="Current Task" action={<AppAction $mr={10} $up={4}><FocusIcon /></AppAction>}>
        <MapFrame $sel><MapArt w={280} h={115} view={[-163, 664, 1213, 500]} /></MapFrame>
        <StopList pl={19} pt={20} />
        <Spacer /><Button><Text $s={15} $ls={-0.15} $c="#fff">Accept</Text></Button><BottomPad $h={8} />
      </Phone>
    </BoardColumn>
    <BoardColumn $mr={0}>
      <BoardLabel><Text $s={10.5} $c="#6a6a6a" $ls={0}>MapView</Text></BoardLabel>
      <Phone title="Start Task" action={<AppAction $mr={9} $up={5}>
        <svg width="28" height="28" viewBox="0 0 28 28"><circle cx="14" cy="14" r="13.500" fill="#2aa5dd" /><path d="M21 7 6 14.500l7 1.300 1.500 6.400z" fill="#fff" /></svg>
      </AppAction>}>
        <MapFrame>
          <MapArt w={281} h={436} view={[21, 276, 843, 1308]} />
          <TripSheet>
            <TripInfo>
              <TripList>
                <TripStop><TripMarker /><Text $s={6} $ls={-0.05}>Matrix</Text></TripStop>
                <TripStop><TripMarker $end /><Text $s={6} $ls={-0.1}>Deeba</Text></TripStop>
              </TripList>
              <TripFacts>
                <Fact><Icon w={13} h={13} c="#3e6d92" sw={1}><circle cx="6.500" cy="6.500" r="5.200" /><path d="M6.500 3v4l2 2" /></Icon><Text $s={7.5} $ls={-0.25}>3H 26M</Text></Fact>
                <Fact><Icon w={13} h={13} c="#222" sw={1}><path d="M4 2.500h7a1.700 1.700 0 0 1 0 4H2.500a1.700 1.700 0 0 0 0 4H8M0 4.500 1.500 1 3 4.500M9.500 8.500h2.500v3H9.500z" /></Icon><Text $s={7.5} $ls={-0.1}>325KM</Text></Fact>
                <Fact><Icon w={13} h={13} c="#222" sw={1}><path d="M2.500 11.500v-9h6v9zM1.500 11.500h8M4 4.500h3v2H4zM8.500 6.500h1.700v3.500h1.500v-5L9.700 3" /></Icon><Text $s={7.5} $ls={-0.15}>55l Fuel</Text></Fact>
              </TripFacts>
            </TripInfo>
            <StartButton><Text $s={15} $ls={-0.7} $c="#fff">START</Text></StartButton>
          </TripSheet>
        </MapFrame>
      </Phone>
    </BoardColumn>
  </Canvas>
);

/* ---------- property inspector ---------- */
const Section = styled.div<{ $h: number }>`height: ${p => p.$h}px; border-bottom: 2px solid ${BORDER}; flex: none;`;
const AlignSection = styled(Section)`display: grid; grid-template-columns: 144px 144px;`;
const AlignGroup = styled.div<{ $sep?: boolean }>`
  display: flex; align-items: center; gap: 16px; padding: 2px 0 0 ${p => p.$sep ? 16 : 17}px; border-right: ${p => p.$sep ? `1px solid ${BORDER}` : 'none'};
`;
const RepeatSection = styled(Section)`display: flex; align-items: center; padding: 2px 0 0 16px;`;
const RepeatButton = styled.div`
  width: 112px; height: 32px; border: 1px solid #e2e2e2; border-radius: 4px; background: #fafafa; display: flex; align-items: center; gap: 10px; padding-left: 12px; margin-right: 35px;
`;
const BoolRow = styled.div`display: flex; gap: 18px;`;
const TransformSection = styled(Section)`padding: 8px 16px 0;`;
const TransformRow = styled.div`height: 48px; display: grid; grid-template-columns: 20px 44px 41px 15px 48px 24px 23px 41px; align-items: center;`;
const Field = styled.div<{ $dx?: number }>`
  height: 30px; display: flex; align-items: center; border-bottom: 1px solid #dedede; margin-left: ${p => -(p.$dx ?? 0)}px; padding-bottom: 1px;
`;
const LockCell = styled.div`height: 48px; padding: 33px 0 0 7px;`;
const LockBottom = styled.div`height: 48px; padding: 0 0 0 7px;`;
const RotateCell = styled.div`display: flex; justify-content: center; margin-left: -7px; width: 16px; padding-top: 2px;`;
const FlipCell = styled.div`padding: 2px 0 0 3px;`;
const CheckRow = styled.div<{ $h: number; $gap?: number }>`height: ${p => p.$h}px; display: flex; align-items: center; gap: ${p => p.$gap ?? 14}px;`;
const Box = styled.div<{ $on?: boolean }>`
  width: 16px; height: 16px; border: 2px solid ${INK}; border-radius: 3px; background: ${p => p.$on ? INK : 'transparent'}; display: flex; align-items: center; justify-content: center; flex: none;
`;
const ResponsiveSection = styled(Section)`padding: 17px 16px 0;`;
const HeadRow = styled.div`height: 14px; display: flex; align-items: center; justify-content: space-between;`;
const Toggle = styled.div`width: 26px; height: 14px; border-radius: 7px; background: ${INK}; display: flex; justify-content: flex-end; align-items: center; padding-right: 2px;`;
const Knob = styled.div`width: 10px; height: 10px; border-radius: 50%; background: #fafafa;`;
const Segmented = styled.div<{ $w: number; $mt: number }>`
  width: ${p => p.$w}px; height: 32px; margin-top: ${p => p.$mt}px; border: 1px solid #e2e2e2; border-radius: 4px; background: #fafafa; display: grid; grid-template-columns: 1fr 1fr;
`;
const Segment = styled.div`display: flex; align-items: center; justify-content: center; & + & { border-left: 1px solid #e2e2e2; }`;
const AppearanceSection = styled(Section)`padding: 17px 16px 0;`;
const OpacityRow = styled.div`height: 50px; margin-top: 14px; display: flex; justify-content: space-between; align-items: flex-start;`;
const OpacityLeft = styled.div`width: 208px; padding-top: 1px; display: flex; flex-direction: column;`;
const Slider = styled.div`display: flex; align-items: center; justify-content: space-between; height: 16px; margin-top: 4px;`;
const Track = styled.div`width: 188px; height: 2px; background: ${INK};`;
const SliderKnob = styled.div`width: 16px; height: 16px; border: 2px solid ${INK}; border-radius: 50%; flex: none;`;
const ValueBox = styled.div`width: 32px; height: 35px; border-bottom: 1px solid #dedede; display: flex; align-items: flex-start; padding: 9px 0 0 1px;`;
const RadiusRow = styled.div`display: flex; gap: 16px; margin: 1px 0 16px; align-items: flex-start;`;
const RadiusValue = styled.div`width: 32px; height: 29px; border-bottom: 1px solid #dedede; padding-top: 3px;`;
const ColorChip = styled.div<{ $c: string }>`width: 32px; height: 16px; border-radius: 2px; background: ${p => p.$c}; border: 1px solid rgba(0,0,0,.12); flex: none;`;
const BlurMore = styled.div`padding-left: 8px;`;
const Inspector = styled.div`display: flex; flex-direction: column;`;
const ExportSection = styled(Section)`padding-left: 16px;`;

const Eyedropper = () => (
  <Icon w={16} h={16} sw={1.2}><path d="m9 4.500 3 3-7.500 7H1.500v-2.500z" /><path d="m8 4 1.500-1.200 1 .8L12.500 1a2 2 0 0 1 3 2.500L13 6l.8 1-1.300 1.500z" fill={INK} stroke="none" /></Icon>
);
const Chevron = () => <Icon w={10} h={7} sw={1.6}><path d="m1 1 4 4 4-4" /></Icon>;
const LIGHT = '#c6c6c6';
const BOOL = '#bdbdbd';

const InspectorPanel = () => (
  <Inspector>
    <AlignSection $h={48}>
      <AlignGroup $sep>
        <Icon w={16} h={16} f={INK} c="none"><path d="M0 1h16v1H0z" /><rect x="3" y="3" width="4" height="11" rx="1" /><rect x="9" y="3" width="4" height="7" rx="1" /></Icon>
        <Icon w={16} h={16} f={INK} c="none"><path d="M0 7h16v1.200H0z" /><rect x="3" y="2" width="4" height="11" rx="1" /><rect x="9" y="4" width="4" height="7" rx="1" /></Icon>
        <Icon w={16} h={16} f={INK} c="none"><path d="M0 13h16v1H0z" /><rect x="3" y="1" width="4" height="11" rx="1" /><rect x="9" y="5" width="4" height="7" rx="1" /></Icon>
        <Icon w={16} h={16} f={LIGHT} c="none"><path d="M3 0h1v16H3zM12 0h1v16h-1z" /><rect x="6" y="3" width="4" height="10" rx="1" /></Icon>
      </AlignGroup>
      <AlignGroup>
        <Icon w={16} h={16} f={INK} c="none"><path d="M1 0h1v16H1z" /><rect x="3" y="3" width="7" height="4" rx="1" /><rect x="3" y="9" width="11" height="4" rx="1" /></Icon>
        <Icon w={16} h={16} f={INK} c="none"><path d="M7 0h1v16H7z" /><rect x="4" y="3" width="7" height="4" rx="1" /><rect x="2" y="9" width="11" height="4" rx="1" /></Icon>
        <Icon w={16} h={16} f={INK} c="none"><path d="M13 0h1v16h-1z" /><rect x="5" y="3" width="7" height="4" rx="1" /><rect x="1" y="9" width="11" height="4" rx="1" /></Icon>
        <Icon w={16} h={16} f={LIGHT} c="none"><path d="M0 3h16v1H0zM0 12h16v1H0z" /><rect x="3" y="6" width="10" height="4" rx="1" /></Icon>
      </AlignGroup>
    </AlignSection>
    <RepeatSection $h={64}>
      <RepeatButton>
        <Icon w={14} h={14} sw={1.1}><rect x=".6" y=".9" width="5" height="5" fill="#ddd" rx=".5" /><rect x="8" y=".9" width="5" height="5" rx=".5" /><rect x=".6" y="8.100" width="5" height="5" rx=".5" /><rect x="8" y="8.100" width="5" height="5" rx=".5" /></Icon>
        <Text $c="#111" $ls={-0.4}>Repeat Grid</Text>
      </RepeatButton>
      <BoolRow>
        <Icon w={14} h={14} c={BOOL} f="#e8e8e8" sw={1}><path d="M.5.500h8.500v4h4.500v9h-9V9.500h-4z" /></Icon>
        <Icon w={14} h={14} c={BOOL} f="#e8e8e8" sw={1}><path d="M.5.500h9v4h-5v5h-4z" /><rect x="4.500" y="4.500" width="9" height="9" fill={PANEL} /></Icon>
        <Icon w={14} h={14} c={BOOL} sw={1}><rect x=".5" y=".5" width="9" height="9" /><rect x="4.500" y="4.500" width="9" height="9" /><rect x="4.500" y="4.500" width="5" height="5" fill="#e8e8e8" /></Icon>
        <Icon w={14} h={14} c={BOOL} f="#e8e8e8" sw={1}><rect x=".5" y=".5" width="9" height="9" /><rect x="4.500" y="4.500" width="9" height="9" /><rect x="4.500" y="4.500" width="5" height="5" fill={PANEL} /></Icon>
      </BoolRow>
    </RepeatSection>
    <TransformSection $h={168}>
      <TransformRow>
        <Text $s={10} $c="#999">W</Text><Field><Text>375</Text></Field>
        <LockCell><Icon w={10} h={15} c="#dedede" sw={1}><path d="M0 .500h7.500V15" /></Icon></LockCell>
        <Text $s={10} $c="#999">X</Text><Field><Text>0</Text></Field>
        <Gap $w={1} />
        <RotateCell><Icon w={16} h={16} sw={1.3}><path d="M12.800 4A6.300 6.300 0 1 0 14.300 9" /><path d="M14.500 1v4.500H10" /><circle cx="8" cy="8.300" r=".8" fill={INK} stroke="none" /></Icon></RotateCell>
        <Field><Text>0°</Text></Field>
      </TransformRow>
      <TransformRow>
        <Text $s={10} $c="#999">H</Text><Field $dx={2}><Text>582</Text></Field>
        <LockBottom>
          <Icon w={14} h={36} c="#dedede" sw={1}><path d="M0 35.500h7.500V20" /><path d="M4.500 10V8.500a2.400 2.400 0 0 1 4.500-1" stroke="#b4b4b4" strokeWidth="1.300" /><rect x="4" y="10" width="7" height="5.500" fill="#b4b4b4" stroke="none" /></Icon>
        </LockBottom>
        <Text $s={10} $c="#999">Y</Text><Field><Text>85</Text></Field>
        <Gap $w={1} />
        <RotateCell><Icon w={14} h={12} sw={1.1}><path d="M1 2.500v7L5 6z" /><path d="M13.500 1.500v9L8.500 6z" fill={INK} stroke="none" /><path d="M6.800 0v12" strokeDasharray="1 1" /></Icon></RotateCell>
        <FlipCell><Icon w={12} h={14} sw={1.1}><path d="M2.500 1h7L6 5z" /><path d="M1.500 13.500h9L6 8.500z" fill={INK} stroke="none" /><path d="M0 6.800h12" strokeDasharray="1 1" /></Icon></FlipCell>
      </TransformRow>
      <CheckRow $h={48}><Box /><Text>Fix position when scrolling</Text></CheckRow>
    </TransformSection>
    <ResponsiveSection $h={112}>
      <HeadRow><Text $s={10} $ls={0.75} $c="#8e8e8e">RESPONSIVE RESIZE</Text><Toggle><Knob /></Toggle></HeadRow>
      <Segmented $w={256} $mt={17}>
        <Segment><Text $c="#1592e6" $ls={-0.1}>Auto</Text></Segment><Segment><Text>Manual</Text></Segment>
      </Segmented>
    </ResponsiveSection>
    <AppearanceSection $h={352}>
      <HeadRow><Text $s={10} $ls={0.75} $c="#8e8e8e">APPEARANCE</Text></HeadRow>
      <OpacityRow>
        <OpacityLeft>
          <Text $s={10} $c="#808080" $ls={-0.2}>Opacity</Text>
          <Slider><Track /><SliderKnob /></Slider>
        </OpacityLeft>
        <ValueBox><Text $ls={-0.5}>100%</Text></ValueBox>
      </OpacityRow>
      <RadiusRow>
        <Segmented $w={64} $mt={0}>
          <Segment><Icon w={12} h={12} c="#1592e6" sw={1.2}><rect x=".7" y=".7" width="10.600" height="10.600" rx="2.500" /></Icon></Segment>
          <Segment><Icon w={12} h={12} sw={1.3}><path d="M.7 4.500V3.200A2.500 2.500 0 0 1 3.200.700h1.300M7.500.700h1.300a2.500 2.500 0 0 1 2.500 2.500v1.300M11.300 7.500v1.300a2.500 2.500 0 0 1-2.500 2.500H7.500M4.500 11.300H3.200A2.500 2.500 0 0 1 .7 8.800V7.500" /></Icon></Segment>
        </Segmented>
        <RadiusValue><Text>0</Text></RadiusValue>
      </RadiusRow>
      <CheckRow $h={48} $gap={16}><Box $on><svg width="12" height="10" viewBox="0 0 12 10" fill="none" stroke="#fff" strokeWidth="2.200"><path d="m1 4.800 3.500 3.500L11 1.300" /></svg></Box><ColorChip $c="#007fa3" /><Text>Fill</Text><Grow /><Eyedropper /></CheckRow>
      <CheckRow $h={48} $gap={16}><Box /><ColorChip $c="#707070" /><Text $ls={-0.5}>Border</Text><Grow /><Eyedropper /></CheckRow>
      <CheckRow $h={48} $gap={16}><Box /><ColorChip $c="repeating-conic-gradient(#d4d4d4 0 25%, #b2b2b2 0 50%) 0 0/16px 16px" /><Text>Shadow</Text></CheckRow>
      <CheckRow $h={48} $gap={16}><Box /><Text $ls={-0.4}>Background Blur</Text><BlurMore><Chevron /></BlurMore></CheckRow>
    </AppearanceSection>
    <ExportSection $h={44}><CheckRow $h={40}><Box /><Text $s={12} $c="#6e6e6e" $ls={-0.35}>Mark for Export</Text></CheckRow></ExportSection>
  </Inspector>
);

/* ---------- taskbar ---------- */
const Taskbar = styled.div`height: 40px; background: #101010; display: flex; flex: none;`;
const SysSlot = styled.div`width: 48px; display: flex; align-items: center; justify-content: center;`;
const AppSlot = styled.div<{ $run?: boolean; $active?: boolean; $stack?: boolean }>`
  width: 48px; margin-right: 1px; height: 40px; display: flex; flex-direction: column; align-items: center; justify-content: flex-end;
  background: ${p => p.$active ? '#333' : 'transparent'};
  &::after { content: ''; height: 2px; width: ${p => p.$active ? 48 : 40}px; background: ${p => !p.$run && !p.$active ? 'transparent' : p.$stack ? 'linear-gradient(90deg,#e9a368 31px,#7d5a3c 31px,#7d5a3c 32px,#b07f53 32px)' : '#e9a368'}; }
`;
const AppIcon = styled.div`height: 38px; display: flex; align-items: center; padding-top: 2px;`;
const Tray = styled.div`display: flex; align-items: center; margin-left: auto;`;
const TrayCell = styled.div<{ $w: number }>`width: ${p => p.$w}px; display: flex; justify-content: center; flex: none;`;
const Clock = styled.div`width: 63px; display: flex; flex-direction: column; align-items: center; gap: 2px; padding-right: 2px;`;
const ShowDesktop = styled.div`width: 5px; height: 40px; border-left: 1px solid #5a5a5a;`;
const XdLogo = styled.div`
  width: 20px; height: 20px; border: 1.5px solid #ff2bc2; border-radius: 3px; background: #2b001e; color: #ffd9f3; margin-top: -2px;
  font: 700 11.5px/16px "Open Sans", sans-serif; font-stretch: 75%; text-align: center; letter-spacing: -.2px;
`;

const Glyph = ({ children }: { children: React.ReactNode }) => <svg width="24" height="24" viewBox="0 0 24 24" fill="none">{children}</svg>;
const apps: { k: string; run?: boolean; stack?: boolean; active?: boolean; icon: React.ReactNode }[] = [
  { k: 'files', run: true, stack: true, icon: <Glyph><path d="M1 3h9l1.500 2H23v15H1z" fill="#f3c64b" /><path d="M1 6h22v14H1z" fill="#fde08c" /><path d="M2 3h7v2H2z" fill="#fff3c4" /><path d="M5 21v-8h14v8h-4v-4H9v4z" fill="#38b1e8" /></Glyph> },
  { k: 'pc', icon: <Glyph><path d="m8 1 15.500 5v11.500L8 12z" fill="#a9c3d3" /><path d="m9.200 2.600 13 4.300v9L9.200 11.300z" fill="#39a5ee" /><path d="m11 15 6-1 3 2-5 1.500z" fill="#9aa7ae" /><path d="m1 17.500 8-2.500 8 3-7 3.500z" fill="#cfd8dc" /><path d="m1 17.500 9 4v1.500l-9-4zM19 18l3-.8v1.500l-3 1z" fill="#8e9ba2" /></Glyph> },
  { k: 'edge', icon: <Glyph><path d="M2 11C3 4 8 1 12.500 1 18 1 22 5 22 11v3H9c.4 5 7 5.500 11 3v4.500C11 26 3 22 4 14c.4-3 2-5 5-6.500-3 .2-5.500 1.500-7 3.500zM9 10.500h7.500c0-4-6.500-4-7.500 0z" fill="#0a78d6" /></Glyph> },
  { k: 'diamond', run: true, icon: <Glyph><path d="m12 1 11 11-11 11L1 12z" stroke="#d5331a" strokeWidth="1.500" /><path d="m12 4 2 4h4l-1 4 2 2-4 1-3 5-3-5-4-1 2-2-1-4h4z" fill="#d5331a" /><path d="m9 9 3 3 3-3M9 14l3-1 3 1M12 14v4M8 17l-3-3M16 17l3-3" stroke="#101010" strokeWidth="1.200" /></Glyph> },
  { k: 'swift', icon: <Glyph><path d="M17 0 8 6l-2 4 5-1 5-4z" fill="#2c72dd" /><path d="m6 9 5-2 8 7-3 3-5-2z" fill="#57d3fa" /><path d="m6 9 5 7 3 1 2-3z" fill="#2f9ff0" /><path d="m7 23 9-6 3-3-5 1-5 4z" fill="#2c72dd" /></Glyph> },
  { k: 'studio', run: true, stack: true, icon: <Glyph><circle cx="12" cy="11" r="10.500" fill="#7cb342" /><circle cx="12" cy="8" r="3.500" fill="#37474f" /><path d="M11 9 5.500 23M13 9l5.500 14M6 16q6 4 12 0" stroke="#e8eef0" strokeWidth="2" /><circle cx="12" cy="9" r="2" fill="#5b7380" /></Glyph> },
  { k: 'chrome', run: true, icon: <Glyph><circle cx="11.500" cy="12" r="11" fill="#fbc117" /><path d="M2 6.500A11 11 0 0 1 22 8H12L7 14z" fill="#dd4b3e" /><path d="M2 6.500 8 16l4 1-2 6A11 11 0 0 1 2 6.500z" fill="#1ca261" /><circle cx="11.500" cy="12" r="5" fill="#fff" /><circle cx="11.500" cy="12" r="4" fill="#4387f5" /><circle cx="17.500" cy="17" r="6.500" fill="#8d8a80" /><path d="M11.500 16q6-6 12 0l-3 1h-6z" fill="#d5d9dc" /><path d="M13 20q5 4 9 0z" fill="#4a4a35" /></Glyph> },
  { k: 'monitor', run: true, icon: <Glyph><path d="m1 7 5-3v13l-4 1z" fill="#b9bec0" /><path d="m5 2 17 1-1 14-14-1z" fill="#dde3e5" stroke="#9aa3a6" /><path d="m8 13 3-6 2 6 2-4 1 3h4" stroke="#2389c4" strokeWidth="1.300" /><ellipse cx="14" cy="20.500" rx="6" ry="2.500" fill="#cfd4d6" /></Glyph> },
  { k: 'panel', run: true, icon: <Glyph><path d="M1.500 4.500h21v15h-21z" fill="#3bb0ea" stroke="#7fd0f5" /><circle cx="8" cy="10" r="4" fill="#1673b8" /><path d="M8 10V6a4 4 0 0 1 4 4z" fill="#f5c04a" /><path d="M15 7.500h5M15 10.500h5M15 13.500h5M13.500 6v8" stroke="#eaf7fd" strokeWidth="1.200" /><path d="M4 17h7" stroke="#f5a623" strokeWidth="1.500" /><path d="M12 17h8" stroke="#eaf7fd" /></Glyph> },
  { k: 'green', run: true, icon: <Glyph><path d="M1 4h22v16H1z" fill="#6aa832" /><path d="M1 4h22v7H1z" fill="#7cb83c" /><path d="M8 8h9v13.500H8z" fill="#e4e4e4" stroke="#6a6a6a" strokeWidth="1.500" /></Glyph> },
  { k: 'crate', run: true, icon: <Glyph><path d="m12 1 10.500 4-10.500 5L1.500 5z" fill="#b5794f" /><path d="M1.500 5 12 10v13L2.500 18z" fill="#7d5632" /><path d="M22.500 5 12 10v13l9.500-5z" fill="#54381f" /><path d="M4 9v8M7 11v8M10 12v9M15 12v8M18 10v8" stroke="#c29a5f" strokeWidth="1.400" /><path d="m5 4 7 4 6-4-6-2z" stroke="#8a4a34" /><path d="m2 12 10 4 10-4" stroke="#2a1b0e" /></Glyph> },
  { k: 'gear', run: true, icon: <Glyph><circle cx="12" cy="12" r="5.800" stroke="#fff" strokeWidth="2" /><path d="M12 3v3.500M12 17.500V21M3 12h3.500M17.500 12H21M5.600 5.600 8 8M16 16l2.400 2.400M5.600 18.400 8 16M16 8l2.400-2.400" stroke="#fff" strokeWidth="3" /></Glyph> },
  { k: 'sound', run: true, icon: <Glyph><path d="M10 1c6 0 8 2 13 8 1 3-1 6-5 8l-5 5z" fill="#868c90" /><ellipse cx="9.500" cy="12" rx="8" ry="10.500" fill="#c2c7ca" stroke="#7c8286" transform="rotate(8 10 12)" /><ellipse cx="9" cy="12" rx="5.500" ry="8" fill="#aab0b4" transform="rotate(8 10 12)" /><ellipse cx="9" cy="12.500" rx="3" ry="4" fill="#e3e6e8" /></Glyph> },
  { k: 'xd', active: true, icon: <XdLogo>Xd</XdLogo> },
];

const BottomBar = () => (
  <Taskbar>
    <SysSlot><Icon w={16} h={16} f="#fff" c="none"><path d="M0 2.300 6.500 1.400v6.100H0zM7.300 1.300 16 0v7.500H7.300zM0 8.400h6.500v6.200L0 13.700zM7.300 8.400H16V16l-8.700-1.300z" /></Icon></SysSlot>
    <SysSlot><Icon w={16} h={16} c="#fff" sw={1.3}><circle cx="10.300" cy="5.700" r="5" /><path d="M6.700 9.300.5 15.500" /></Icon></SysSlot>
    <SysSlot><Icon w={17} h={16} c="#f2f2f2" sw={1.2}><path d="M1 0v2.500h10V0M1 4.500h10v7H1zM1 16v-2.500h10V16M14.500 0v3M14.500 8v8" /><path d="M13 4.500h3v3h-3z" fill="#fff" stroke="none" /></Icon></SysSlot>
    <Gap $w={3} />
    {apps.map(a => <AppSlot key={a.k} $run={a.run} $stack={a.stack} $active={a.active}><AppIcon>{a.icon}</AppIcon></AppSlot>)}
    <Tray>
      <TrayCell $w={36}><Icon w={15} h={15} c="#fff" sw={1.3}><circle cx="10" cy="3.500" r="2.800" /><path d="M6.500 10c.5-4.500 7.500-4.500 7.500-.5" /><circle cx="4" cy="8.500" r="2.300" /><path d="M.7 14.500c0-4.500 6.600-4.500 6.600 0" /></Icon></TrayCell>
      <TrayCell $w={36}><Icon w={12} h={8} c="#fff" sw={1.3}><path d="m.5 6.500 5.500-5 5.500 5" /></Icon></TrayCell>
      <TrayCell $w={13}><Icon w={15} h={9} c="#fff" sw={1}><path d="M.5.500h12.500v8H.500zM13.500 3h1v3h-1" /><path d="M2 2h8v5H2z" fill="#fff" stroke="none" /></Icon></TrayCell>
      <TrayCell $w={35}><Icon w={16} h={15} c="#a8a8a8" sw={1.3}><path d="M0 1h9M0 4h9M0 7h6" /><path d="M8 7h3l4-3v11l-4-3H8z" /></Icon></TrayCell>
      <TrayCell $w={15}><Icon w={13} h={13} c="#c8c8c8" sw={1.2}><path d="M.6 12.500A12 12 0 0 1 12.500.800M3.500 12.500a9 9 0 0 1 9-8.500M6.500 12.500a6 6 0 0 1 6-5.500" /><circle cx="11" cy="11.300" r="1.500" fill="#fff" stroke="none" /></Icon></TrayCell>
      <TrayCell $w={29}><Icon w={15} h={13} c="#fff" sw={1.2}><path d="M.6 4.500h2L6 1.500v10l-3.400-3h-2zM9 4l5 5M14 4 9 9" /></Icon></TrayCell>
      <Clock><Text $s={12} $c="#fff" $ls={-0.5}>8:40 PM</Text><Text $s={12} $c="#fff" $ls={-0.5}>8/13/2019</Text></Clock>
      <TrayCell $w={47}>
        <svg width="26" height="26" viewBox="0 0 26 26"><path d="M2 1h16v13H8l-2 3v-3H2z" fill="#fff" /><path d="M4.500 4.500h11M4.500 7.500h11M4.500 10.500h6" stroke="#101010" /><circle cx="17" cy="16.500" r="8" fill="#3a3a3a" stroke="#8f8f8f" /><text x="17" y="20.300" textAnchor="middle" fontSize="11" fontWeight="600" fill="#fff" fontFamily='"Open Sans", sans-serif'>3</text></svg>
      </TrayCell>
      <ShowDesktop />
    </Tray>
  </Taskbar>
);

export default function App() {
  return (
    <Screen>
      <Global />
      <TitleBar>
        <Icon w={10} h={10} c="#222" sw={1}><path d="M0 5.500h10" /></Icon>
        <Icon w={10} h={10} c="#222" sw={1}><path d="M.5 2.500h7v7h-7zM2.500 2.500v-2h7v7h-2" /></Icon>
        <Icon w={10} h={10} c="#222" sw={1.1}><path d="m0 0 10 10M10 0 0 10" /></Icon>
      </TitleBar>
      <Toolbar>
        <ToolbarLeft>
          <ToolIconBox $w={51} $pt={14}><Icon w={16} h={12} sw={2}><path d="M0 1h16M0 6h16M0 11h16" /></Icon></ToolIconBox>
          <ToolIconBox $w={50} $pt={12}><Icon w={16} h={16} f={INK} c="none"><path d="m8 .5 8 7.300h-2.300V15H9.800V10H6.200v5H2.300V7.800H0z" /></Icon></ToolIconBox>
          <Tab $on><Text $s={13} $ls={-0.37} $c="#333">Design</Text></Tab>
          <Tab><Text $s={13} $ls={-0.37} $c="#8a8a8a">Prototype</Text></Tab>
        </ToolbarLeft>
        <DocTitle><Text $ls={-0.43} $c="#333">deeba_newest</Text><TitleChevron><Chevron /></TitleChevron></DocTitle>
        <ToolbarRight>
          <ZoomField><Text $s={12}>75%</Text><Chevron /></ZoomField>
          <Gap $w={62} />
          <Icon w={10} h={16} f={INK} c="none"><path fillRule="evenodd" d="M1.500.500h7a1 1 0 0 1 1 1v13a1 1 0 0 1-1 1h-7a1 1 0 0 1-1-1v-13a1 1 0 0 1 1-1zM1.800 2.500v9.500h6.400V2.500zM4.300 13v1h1.400v-1z" /></Icon>
          <Gap $w={36} />
          <Icon w={13} h={14} f={INK} c="none"><path d="M0 .5 13 7 0 13.500z" /></Icon>
          <ShareButton><Text $w={700} $c="#fff" $ls={-0.6}>Share</Text></ShareButton>
        </ToolbarRight>
      </Toolbar>
      <Main><ToolStrip /><AssetsPanel /><CanvasArea /><InspectorPanel /></Main>
      <BottomBar />
    </Screen>
  );
}
